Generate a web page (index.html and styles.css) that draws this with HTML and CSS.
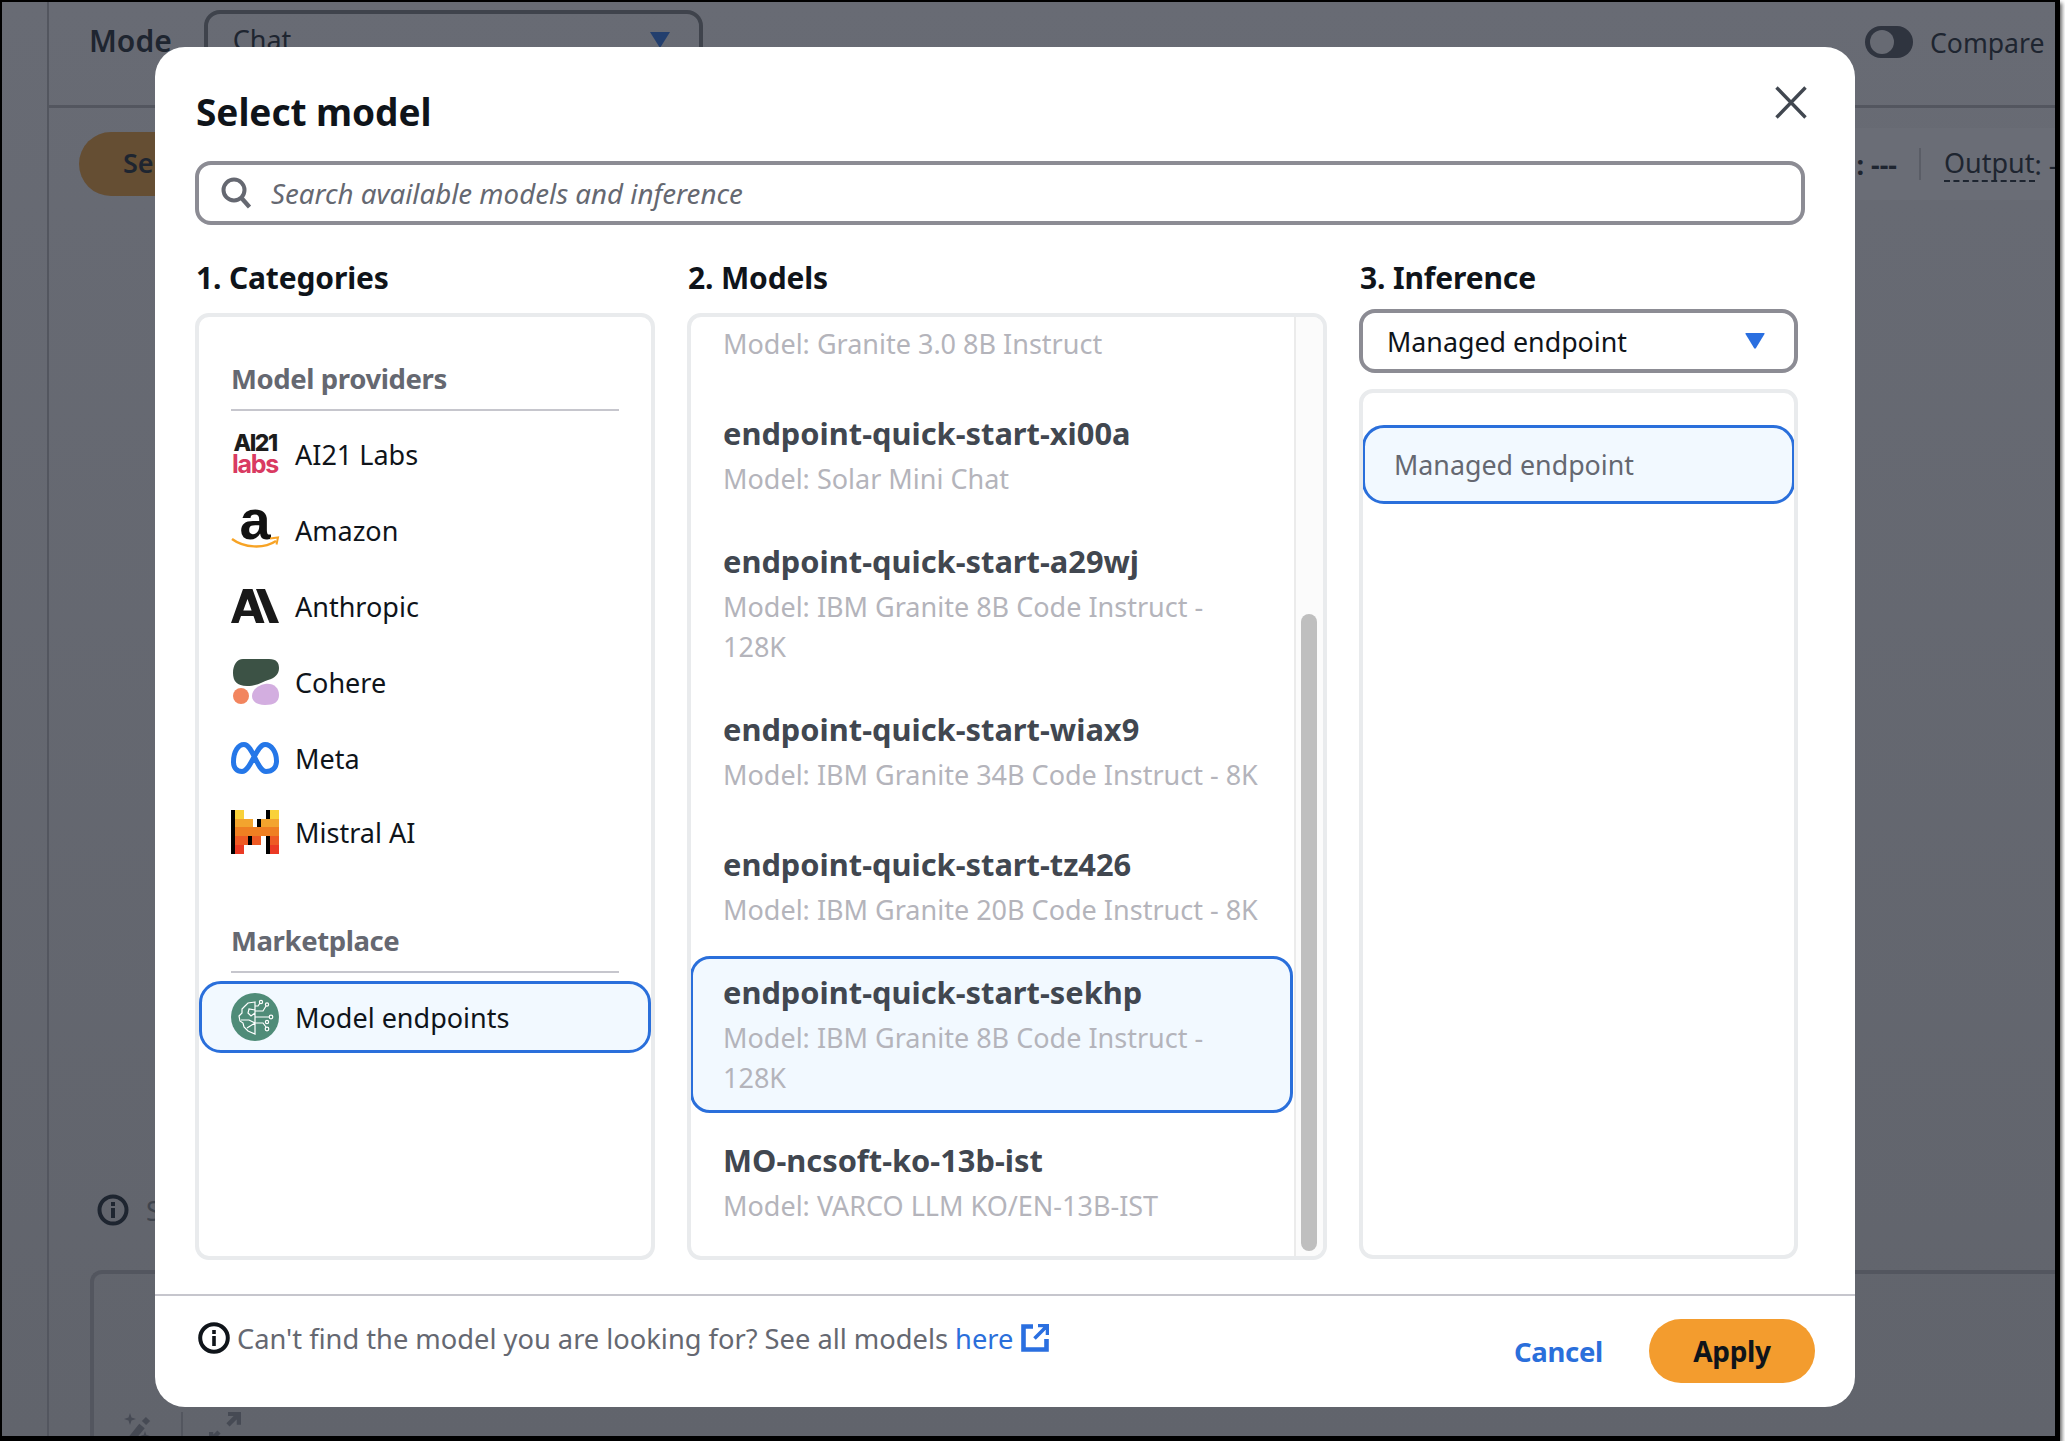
FILE: index.html
```html
<!DOCTYPE html>
<html lang="en">
<head>
<meta charset="utf-8">
<title>Select model</title>
<link rel="stylesheet" href="styles.css">
</head>
<body>
<div class="shot">
  <div class="app">
    <div class="side"></div>
    <div class="main">
      <header class="bar">
        <span class="mode">Mode</span>
        <div class="chat"><span>Chat</span><svg class="chat-arrow" viewBox="0 0 20 16"><path d="M0 0h20L10 16z"/></svg></div>
        <div class="spacer"></div>
        <span class="toggle"><i></i></span>
        <span class="compare">Compare</span>
      </header>
      <div class="tools">
        <span class="send">Se</span>
        <div class="spacer"></div>
        <div class="counts"><span class="dash">: ---</span><span class="vr"></span><span class="output">Output</span><span>: ---</span></div>
      </div>
      <div class="hint">
        <svg class="ico-info" viewBox="0 0 32 32"><circle cx="16" cy="16" r="13.5" fill="none" stroke="#1e2530" stroke-width="4"/><path d="M16 14v10M16 8v4" stroke="#1e2530" stroke-width="4" fill="none"/></svg>
        <span>S</span>
      </div>
      <div class="prompt">
        <div class="prompt-tools">
          <svg class="pt" viewBox="0 0 28 24"><path d="M7 1l1.500 4.500L13 7l-4.500 1.500L7 13l-1.500-4.500L1 7l4.500-1.500zM22 19l1.200 3.800L27 24l-3.800 1.200H20.800L17 24l3.800-1.200z" fill="#464a54"/><path d="M6 30L19 14" stroke="#464a54" stroke-width="7" fill="none"/><path d="M21 11l4-4" stroke="#464a54" stroke-width="6" fill="none"/></svg>
          <span class="pt-sep"></span>
          <svg class="pt pt-wide" viewBox="0 0 32 24"><path d="M19 1.800h11v11M29.500 2.300L19 12.800" stroke="#464a54" stroke-width="4.500" fill="none"/><path d="M2 30V20M2 28l8-8" stroke="#464a54" stroke-width="4.500" fill="none"/></svg>
        </div>
      </div>
    </div>
  </div>

  <div class="modal" role="dialog">
    <div class="modal-body">
      <div class="title-row">
        <h1>Select model</h1>
        <svg class="close" viewBox="0 0 32 33"><path d="M1.500 1.500l29 30M30.500 1.500l-29 30" stroke="#414750" stroke-width="3.400" fill="none"/></svg>
      </div>
      <div class="search">
        <svg class="search-ico" viewBox="0 0 30 32"><circle cx="13" cy="13" r="10.500" fill="none" stroke="#656871" stroke-width="4"/><path d="M20.500 21l8 9" stroke="#656871" stroke-width="4.400" fill="none"/></svg>
        <span>Search available models and inference</span>
      </div>
      <div class="cols">
        <section class="col col-1">
          <h2>1. Categories</h2>
          <div class="panel cat-panel">
            <h3 class="first">Model providers</h3>
            <ul class="cats">
              <li>
                <span class="logo ai21"><b>AI21</b><em>labs</em></span>AI21 Labs
              </li>
              <li>
                <svg class="logo" viewBox="0 0 48 42"><text x="24" y="30" text-anchor="middle" class="amz">a</text><path d="M1 30c12 9 32 10 44 2" stroke="#f7a325" stroke-width="2.400" fill="none"/><path d="M39 29.500l8-1-1.500 7" stroke="#f7a325" stroke-width="2" fill="none"/></svg>
                Amazon
              </li>
              <li>
                <svg class="logo" viewBox="0 0 48 34"><path d="M12 0h9.500l12 34H25l-2.500-7H10l-2.500 7H0zM16.500 10L12.300 21.500h8.300z" fill="#191919" fill-rule="evenodd"/><path d="M25 0h9l14 34h-9.500z" fill="#191919"/></svg>
                Anthropic
              </li>
              <li>
                <svg class="logo" viewBox="0 0 48 46"><path d="M12 0h26c8 0 10 4 10 9 0 6-4 10-11 12-6 2-11 6-21 6C6 27 2 22 2 14 2 6 6 0 12 0z" fill="#3c5245"/><circle cx="10" cy="37" r="8" fill="#f2855e"/><path d="M34 25c9-1 14 4 14 11s-5 10-14 10c-7 0-13-3-13-9s6-11 13-12z" fill="#d3aee0"/></svg>
                Cohere
              </li>
              <li>
                <svg class="logo" viewBox="0 0 48 32"><path d="M2.500 20C2.500 9 7.500 2.500 13 2.500c9 0 13 27 22 27 6.500 0 10.500-4 10.500-10.500C45.500 10 40.500 2.500 34 2.500c-9 0-14 27-23 27-5 0-8.500-3.500-8.500-9.500z" fill="none" stroke="#2577e8" stroke-width="5"/></svg>
                Meta
              </li>
              <li class="mistral-row">
                <svg class="logo" viewBox="0 0 48 44" shape-rendering="crispEdges">
                  <rect width="48" height="44" fill="#fff"/>
                  <rect x="0" y="0" width="4" height="44" fill="#000"/>
                  <rect x="35" y="0" width="4" height="9" fill="#000"/>
                  <rect x="4" y="0" width="9" height="9" fill="#f9d13a"/><rect x="39" y="0" width="9" height="9" fill="#f9d13a"/>
                  <rect x="4" y="9" width="18" height="8" fill="#f3a42e"/><rect x="30" y="9" width="18" height="8" fill="#f3a42e"/>
                  <rect x="26" y="9" width="4" height="8" fill="#000"/>
                  <rect x="4" y="17" width="44" height="9" fill="#ef7f22"/>
                  <rect x="4" y="26" width="13" height="9" fill="#ee5a24"/><rect x="21" y="26" width="9" height="9" fill="#ee5a24"/><rect x="39" y="26" width="9" height="9" fill="#ee5a24"/>
                  <rect x="17" y="26" width="4" height="9" fill="#000"/><rect x="35" y="26" width="4" height="18" fill="#000"/>
                  <rect x="4" y="35" width="9" height="9" fill="#eb3a24"/><rect x="39" y="35" width="9" height="9" fill="#eb3a24"/>
                </svg>
                Mistral AI
              </li>
            </ul>
            <h3 class="second">Marketplace</h3>
            <div class="cat-selected">
              <svg class="logo" viewBox="0 0 48 48"><circle cx="24" cy="24" r="24" fill="#4f8c78"/><g fill="none" stroke="#fff" stroke-width="1.200"><path d="M24 9l-7 1-3 3-3 3v4l-3 3 1 5 3 2 1 4 4 4 7 3V9zM24 17l-6-1-1 4 3 3 4-3M10 27h8l6 3M16 35l8-5"/><path d="M24 18h8l3-5M24 24h14M24 30h8l3 4M24 13h3l2-3"/><circle cx="30" cy="9" r="1.600"/><circle cx="36" cy="11.500" r="1.600"/><circle cx="40" cy="24" r="1.800"/><circle cx="36" cy="36" r="1.800"/><circle cx="36" cy="29" r="1.600"/></g></svg>
              Model endpoints
            </div>
          </div>
        </section>
        <section class="col col-2">
          <h2>2. Models</h2>
          <div class="panel model-panel">
            <div class="model-list">
              <div class="model cut"><p>Model: Granite 3.0 8B Instruct</p></div>
              <div class="model"><h4>endpoint-quick-start-xi00a</h4><p>Model: Solar Mini Chat</p></div>
              <div class="model"><h4>endpoint-quick-start-a29wj</h4><p>Model: IBM Granite 8B Code Instruct -<br>128K</p></div>
              <div class="model tall"><h4>endpoint-quick-start-wiax9</h4><p>Model: IBM Granite 34B Code Instruct - 8K</p></div>
              <div class="model"><h4>endpoint-quick-start-tz426</h4><p>Model: IBM Granite 20B Code Instruct - 8K</p></div>
              <div class="model on"><h4>endpoint-quick-start-sekhp</h4><p>Model: IBM Granite 8B Code Instruct -<br>128K</p></div>
              <div class="model"><h4>MO-ncsoft-ko-13b-ist</h4><p>Model: VARCO LLM KO/EN-13B-IST</p></div>
            </div>
            <div class="track"><div class="thumb"></div></div>
          </div>
        </section>
        <section class="col col-3">
          <h2>3. Inference</h2>
          <div class="select"><span>Managed endpoint</span><svg class="sel-arrow" viewBox="0 0 20 16"><path d="M1 0h18q1 0 .5 1L11 15q-1 1.500-2 0L.5 1Q0 0 1 0z" fill="#2a6fe0"/></svg></div>
          <div class="panel inf-panel">
            <div class="inf-selected">Managed endpoint</div>
          </div>
        </section>
      </div>
    </div>
    <footer class="foot">
      <div class="foot-note">
        <svg class="foot-info" viewBox="0 0 32 32"><circle cx="16" cy="16" r="13.800" fill="none" stroke="#0f141a" stroke-width="4"/><path d="M16 14v10M16 8v4" stroke="#0f141a" stroke-width="3.600" fill="none"/></svg>
        <span>Can't find the model you are looking for? See all models <a>here</a></span>
        <svg class="ext" viewBox="0 0 28 28"><path d="M12 2.500H2.500v23h23V15" fill="none" stroke="#2a6fe0" stroke-width="4.600"/><path d="M17 1.500h9.500V11M26 2L13.500 14.500" fill="none" stroke="#2a6fe0" stroke-width="3.600"/></svg>
      </div>
      <div class="foot-actions">
        <span class="cancel">Cancel</span>
        <span class="apply">Apply</span>
      </div>
    </footer>
  </div>
</div>
</body>
</html>
```

FILE: styles.css
```css
* { box-sizing: border-box; }
html, body { margin: 0; padding: 0; background: #fff; }
body { font-family: "Noto Sans", "Open Sans", sans-serif; color: #0f141a; }
.shot {
  position: relative;
  width: 2060px;
  height: 1441px;
  border: solid #000;
  border-width: 2px 5px 5px 2px;
  box-shadow: 2px 3px 4px rgba(0,0,0,.6);
  overflow: hidden;
}
.app { display: flex; width: 100%; height: 100%; background: linear-gradient(#686b74, #61646c); }
.side { width: 47px; border-right: 2px solid #53565f; flex: none; }
.main { flex: 1; min-width: 0; display: flex; flex-direction: column; }
.bar { height: 106px; border-bottom: 3px solid #53565f; display: flex; align-items: flex-start; padding: 0 0 0 40px; flex: none; }
.mode { font-size: 30px; font-weight: 600; color: #1e2530; margin-top: 19px; line-height: 40px; }
.chat { width: 499px; height: 70px; margin: 8px 0 0 32px; border: 4px solid #3f434c; border-radius: 16px; padding: 8px 29px 0 25px; display: flex; justify-content: space-between; font-size: 27px; color: #1e2530; line-height: 36px; }
.chat-arrow { width: 20px; height: 16px; margin-top: 10px; fill: #233f6e; }
.spacer { flex: 1; }
.toggle { width: 48px; height: 32px; border-radius: 16px; background: #2f343f; margin-top: 24px; padding: 4px 0 0 5px; flex: none; }
.toggle i { display: block; width: 24px; height: 24px; border-radius: 50%; background: #676a73; }
.compare { font-size: 26.600px; color: #1e2530; margin: 22px 0 0 17px; line-height: 38px; width: 125px; flex: none; white-space: nowrap; overflow: hidden; }
.tools { height: 88px; display: flex; padding: 24px 0 0 30px; flex: none; }
.send { width: 140px; height: 64px; border-radius: 32px; background: #654e33; font-size: 27px; font-weight: 600; color: #1e2530; padding-left: 44px; line-height: 62px; }
.counts { width: 220px; height: 72px; margin-top: -4px; background: #6a6d76; display: flex; align-items: center; color: #1e2530; font-size: 27px; white-space: nowrap; overflow: hidden; flex: none; }
.dash { width: 62px; text-align: right; font-weight: 700; flex: none; }
.vr { width: 2px; height: 32px; background: #5a5d66; margin: 0 23px 0 22px; flex: none; }
.output { border-bottom: 2px dashed #1e2530; line-height: 34px; height: 36px; }
.hint { display: flex; align-items: center; gap: 17px; margin: 998px 0 0 48px; height: 32px; font-size: 27px; color: #3f444d; flex: none; }
.ico-info { width: 32px; height: 32px; flex: none; }
.prompt { margin: 44px 0 0 41px; border: solid #53565f; border-width: 4px 0 0 4px; border-radius: 12px 0 0 0; flex: 1; display: flex; align-items: flex-end; }
.prompt-tools { display: flex; align-items: flex-end; padding: 0 0 0 29px; overflow: hidden; }
.pt { width: 28px; height: 24px; overflow: hidden; flex: none; }
.pt-wide { width: 32px; margin-left: 26px; }
.pt-sep { width: 2px; height: 24px; background: #53565f; margin-left: 30px; flex: none; }

.modal {
  position: absolute;
  left: 153px;
  top: 45px;
  width: 1700px;
  height: 1360px;
  background: #fff;
  border-radius: 30px;
  display: flex;
  flex-direction: column;
}
.modal-body { flex: 1; padding: 0 50px 0 40px; min-height: 0; }
.title-row { height: 114px; display: flex; justify-content: space-between; align-items: flex-start; }
h1 { margin: 0; font-size: 37px; font-weight: 700; line-height: 50px; padding: 40px 0 0 1px; letter-spacing: -.05px; }
.close { width: 32px; height: 33px; margin: 39px -2px 0 0; }
.search { height: 64px; border: 4px solid #8c8c94; border-radius: 16px; display: flex; align-items: center; padding-left: 22px; gap: 20px; }
.search-ico { width: 30px; height: 32px; flex: none; }
.search span { font-style: italic; font-size: 27.700px; color: #656871; }
.cols { display: flex; align-items: flex-start; margin-top: 32px; }
.col { flex: none; }
.col-1 { width: 460px; margin-right: 32px; }
.col-2 { width: 640px; margin-right: 32px; }
.col-3 { width: 439px; }
h2 { margin: 0; font-size: 30px; font-weight: 700; line-height: 40px; height: 56px; padding: 1px 0 0 1px; letter-spacing: -.15px; }
.panel { border: 4px solid #e9ebed; border-radius: 14px; background: #fff; height: 947px; overflow: hidden; }
.cat-panel { padding: 0 32px; }
h3 { margin: 0; font-size: 27.500px; font-weight: 700; color: #656871; line-height: 38px; border-bottom: 2px solid #c6c6cd; letter-spacing: -.4px; padding: 0 0 11px; }
h3.first { margin-top: 43px; }
h3.second { margin-top: 54px; }
.cats { list-style: none; margin: 5px 0 0; padding: 0; }
.cats li { display: flex; align-items: center; gap: 16px; height: 76px; font-size: 27px; }
.cats .mistral-row { height: 72px; }
.logo { width: 48px; height: auto; flex: none; display: block; overflow: visible; }
.amz { font-family: "Liberation Sans", sans-serif; font-weight: 700; font-size: 56px; fill: #111; }
.ai21 { display: flex; flex-direction: column; align-items: center; height: 42px; font-family: Inter, sans-serif; }
.ai21 b { font-size: 23px; line-height: 20px; color: #1c1c1c; font-weight: 800; letter-spacing: -1.500px; }
.ai21 em { font-style: normal; font-weight: 700; font-size: 25px; line-height: 22px; color: #d93a62; letter-spacing: -1.200px; }
.cat-selected { margin: 8px -32px 0; height: 72px; border: 3px solid #2a6fdb; border-radius: 22px; background: #f2f9ff; display: flex; align-items: center; gap: 16px; padding-left: 29px; font-size: 27px; }

.model-panel { display: flex; }
.model-list { flex: 1; min-width: 0; padding: 0 1px 0 0; }
.model { padding: 0 28px 0 32px; margin-bottom: 42px; }
.model h4 { margin: 0; font-size: 30.800px; font-weight: 700; color: #414750; line-height: 40px; white-space: nowrap; }
.model p { margin: 6px 0 0; font-size: 27px; color: #b4b4bb; line-height: 40px; }
.model.cut { padding-top: 7px; margin-bottom: 49px; }
.model.cut p { margin: 0; }
.model.tall { margin-bottom: 49px; }
.model.on { border: 3px solid #2a6fdb; border-radius: 20px; background: #f2f9ff; padding: 13px 25px 12px 30px; margin: -16px 0 27px -1px; }
.track { width: 29px; flex: none; background: #fbfbfb; border-left: 2px solid #ebebeb; padding: 297px 0 0 5px; }
.thumb { width: 16px; height: 637px; border-radius: 8px; background: #bfbfbf; }

.select { height: 64px; border: 4px solid #8c8c94; border-radius: 16px; display: flex; align-items: center; justify-content: space-between; padding: 0 29px 0 24px; font-size: 26.800px; margin: -4px 0 16px; }
.sel-arrow { width: 20px; height: 16px; flex: none; }
.inf-panel { height: 870px; padding-top: 32px; }
.inf-selected { height: 79px; border: 3px solid #2a6fdb; border-radius: 22px; background: #f2f9ff; margin: 0 -1px; display: flex; align-items: center; padding-left: 29px; font-size: 26.800px; color: #656871; }

.foot { flex: none; height: 113px; border-top: 2px solid #c6c6cd; display: flex; justify-content: space-between; padding: 0 40px 0 43px; }
.foot-note { display: flex; align-items: center; height: 62px; margin-top: 11px; font-size: 27.250px; color: #656871; }
.foot-note a { color: #2a6fdb; }
.foot-info { width: 32px; height: 32px; flex: none; margin-right: 7px; }
.ext { width: 28px; height: 28px; margin-left: 8px; flex: none; }
.foot-actions { display: flex; align-items: center; gap: 46px; height: 64px; margin-top: 23px; }
.cancel { color: #2a6fdb; font-size: 27.500px; font-weight: 700; letter-spacing: -.3px; }
.apply { width: 166px; height: 64px; border-radius: 32px; background: #f39c2e; font-size: 28px; font-weight: 700; letter-spacing: -.3px; display: flex; align-items: center; justify-content: center; }
```
